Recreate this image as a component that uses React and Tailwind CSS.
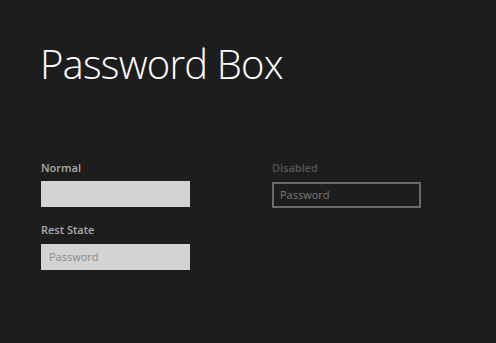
export default function App() {
  return (
    <div className="w-[496px] h-[343px] bg-[#1d1d1d] overflow-hidden pl-[40px] pt-[36px]" style={{ fontFamily: '"Open Sans", sans-serif' }}>
      <h1 className="text-[40px] leading-[56px] font-light text-white tracking-[-0.8px]">Password Box</h1>
      <div className="flex gap-[82px] mt-[68px] pl-[1px]">
        <div className="flex flex-col w-[149px]">
          <div className="text-[11px] leading-[15px] font-semibold text-[#ababab]">Normal</div>
          <div className="mt-[6px] h-[26px] bg-[#d3d3d3]" />
          <div className="mt-[15px] text-[11px] leading-[15px] font-semibold text-[#ababab]">Rest State</div>
          <div className="mt-[7px] h-[26px] bg-[#d3d3d3] flex items-center px-[8px] text-[11px] text-[#8a8a8a]">Password</div>
        </div>
        <div className="flex flex-col w-[149px]">
          <div className="text-[11px] leading-[15px] font-semibold text-[#565656]">Disabled</div>
          <div className="mt-[7px] h-[26px] border-2 border-[#6a6a6a] flex items-center px-[6px] text-[11px] text-[#7a7a7a]">Password</div>
        </div>
      </div>
    </div>
  );
}
